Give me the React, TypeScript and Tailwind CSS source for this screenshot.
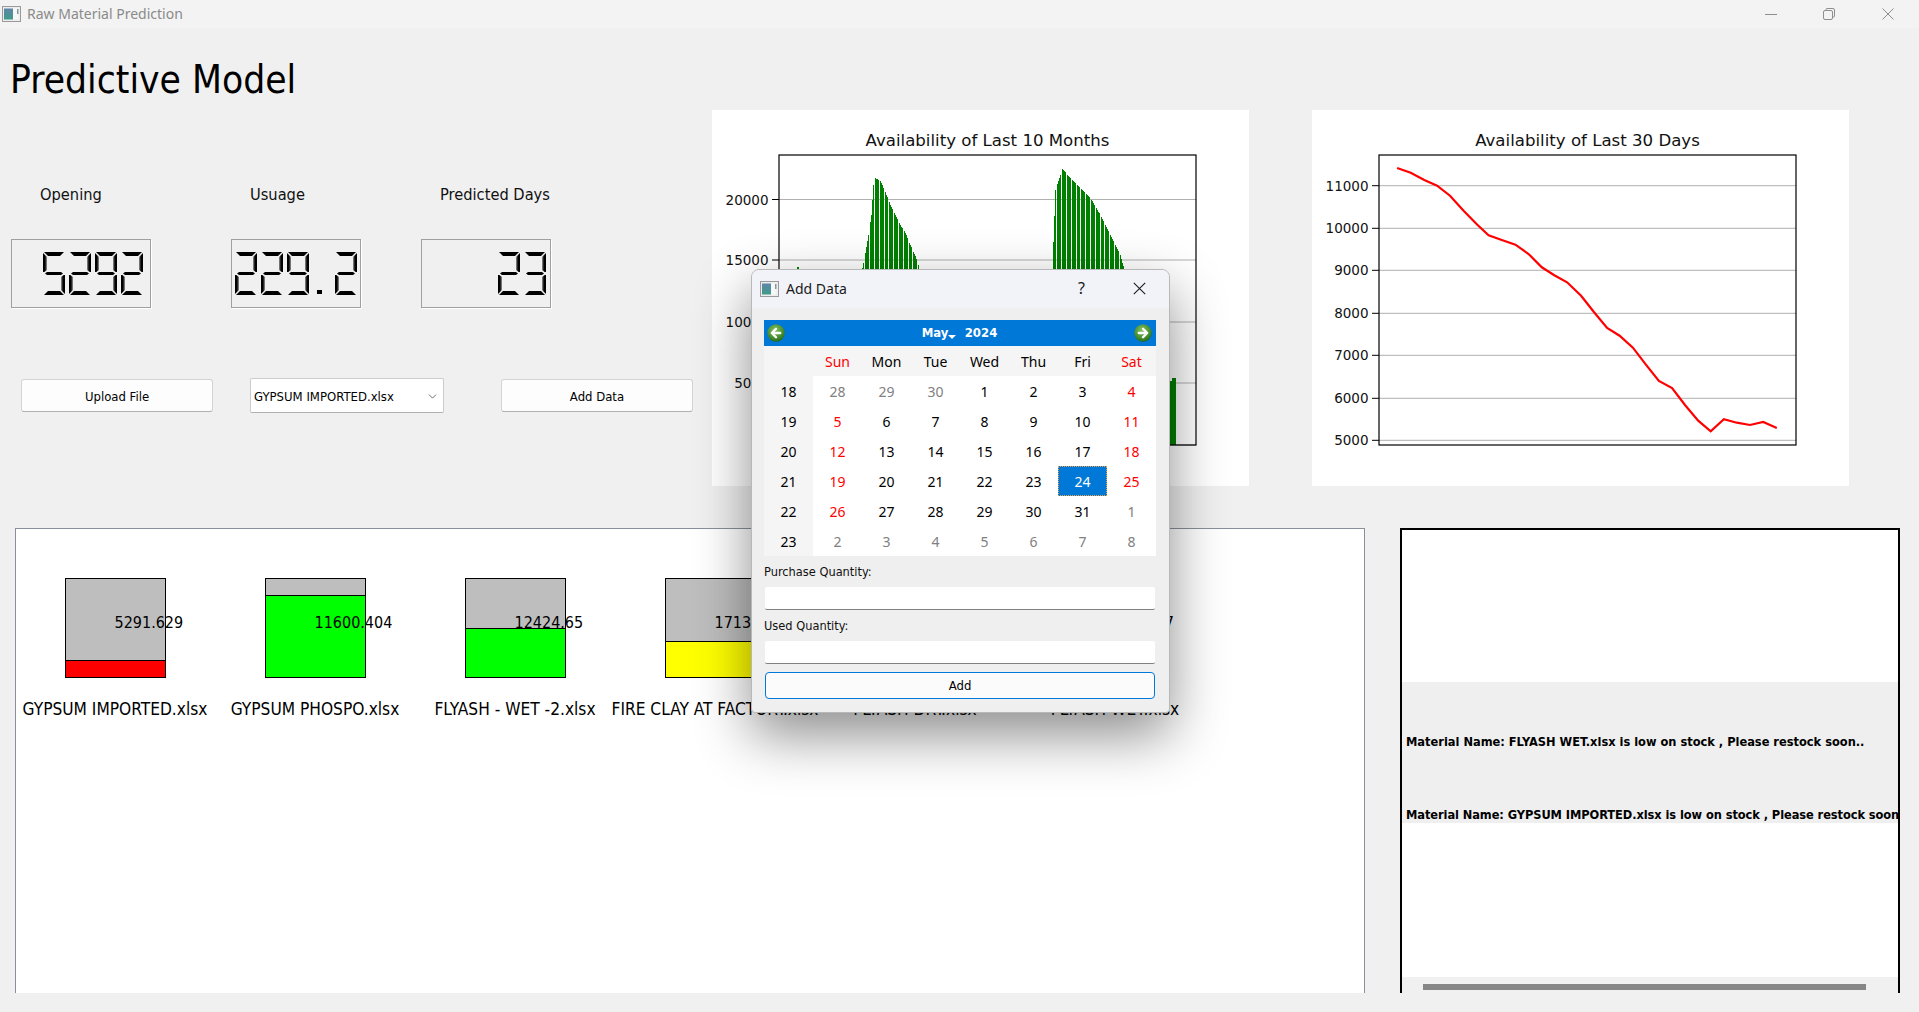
import { ChevronDown } from "lucide-react";

const ui = "[font-family:'DejaVu_Sans_Condensed','Liberation_Sans',sans-serif]";
const seg = "[font-family:'Noto_Sans','Open_Sans',sans-serif]";

const segA = "col-start-1 col-end-4 row-start-1 row-end-2 bg-black [clip-path:polygon(1px_0,calc(100%-1px)_0,calc(100%-5px)_100%,5px_100%)]";
const segD = "col-start-1 col-end-4 row-start-5 row-end-6 bg-black [clip-path:polygon(5px_0,calc(100%-5px)_0,calc(100%-1px)_100%,1px_100%)]";
const segG = "col-start-1 col-end-4 row-start-3 row-end-4 bg-black [clip-path:polygon(4px_0,calc(100%-4px)_0,calc(100%-2px)_50%,calc(100%-4px)_100%,4px_100%,2px_50%)]";
const segF = "col-start-1 col-end-2 row-start-1 row-end-3 bg-[linear-gradient(to_right,#000_50%,#999_100%)] [clip-path:polygon(0_1px,100%_5px,100%_calc(100%-2px),0_calc(100%+1px))]";
const segB = "col-start-3 col-end-4 row-start-1 row-end-3 bg-[linear-gradient(to_left,#000_50%,#999_100%)] [clip-path:polygon(0_5px,100%_1px,100%_calc(100%+1px),0_calc(100%-2px))]";
const segE = "col-start-1 col-end-2 row-start-4 row-end-6 bg-[linear-gradient(to_right,#000_50%,#999_100%)] [clip-path:polygon(0_-1px,100%_2px,100%_calc(100%-5px),0_calc(100%-1px))]";
const segC = "col-start-3 col-end-4 row-start-4 row-end-6 bg-[linear-gradient(to_left,#000_50%,#999_100%)] [clip-path:polygon(0_2px,100%_-1px,100%_calc(100%-1px),0_calc(100%-5px))]";

const digitSegs: Record<string, string[]> = {
  "2": [segA, segB, segG, segE, segD],
  "3": [segA, segB, segG, segC, segD],
  "5": [segA, segF, segG, segC, segD],
  "9": [segA, segF, segB, segG, segC, segD],
};

function Digit({ d }: { d: string }) {
  return (
    <div aria-hidden className="grid w-[22px] h-[43px] grid-cols-[4px_14px_4px] grid-rows-[4px_16px_3px_16px_4px]">
      {digitSegs[d].map((c) => (
        <div key={c} className={c} />
      ))}
    </div>
  );
}

function Lcd({ value, className }: { value: string; className: string }) {
  return (
    <div className={`relative h-[69px] border border-[#a0a0a0] shadow-[1px_1px_0_#ffffff] flex items-center justify-end gap-[4px] ${className}`}>
      <span className="absolute right-[6px] top-[10px] text-[36px] leading-[46px] text-transparent select-none">{value}</span>
      {value.split("").map((c, i) =>
        c === "." ? (
          <div key={i} aria-hidden className="w-[18px] h-[43px] flex items-end pl-[4px] pb-[1px]">
            <div className="w-[5px] h-[4px] bg-black" />
          </div>
        ) : (
          <Digit key={i} d={c} />
        )
      )}
    </div>
  );
}

function AppIcon() {
  return (
    <svg width="19" height="16" viewBox="0 0 19 16" className="shrink-0">
      <defs>
        <linearGradient id="iconFill" x1="0" y1="0" x2="0" y2="1">
          <stop offset="0" stopColor="#5f86a8" />
          <stop offset="1" stopColor="#3f9a8a" />
        </linearGradient>
      </defs>
      <rect x="0.5" y="0.5" width="18" height="15" fill="#ededed" stroke="#9a9a9a" />
      <rect x="2" y="2.5" width="9" height="11" fill="url(#iconFill)" />
      <rect x="11" y="2.5" width="5.5" height="11" fill="#f7f7f7" />
      <rect x="15" y="3" width="1.5" height="5" fill="#7d9a9a" />
    </svg>
  );
}

function NavArrow({ dir }: { dir: "l" | "r" }) {
  const id = dir === "l" ? "navL" : "navR";
  return (
    <svg width="18" height="18" viewBox="0 0 17 17">
      <defs>
        <radialGradient id={id} cx="0.45" cy="0.35" r="0.7">
          <stop offset="0" stopColor="#8cc56a" />
          <stop offset="0.7" stopColor="#3f8a2a" />
          <stop offset="1" stopColor="#1f5f1a" />
        </radialGradient>
      </defs>
      <circle cx="8.5" cy="8.5" r="8.2" fill={`url(#${id})`} />
      <g transform={dir === "l" ? "" : "translate(17,0) scale(-1,1)"} fill="none" stroke="#ffffff" strokeWidth="2.2" strokeLinecap="round" strokeLinejoin="round">
        <path d="M12.5 8.5H5" />
        <path d="M8.5 4.5L4.5 8.5L8.5 12.5" />
      </g>
    </svg>
  );
}

type Env = [number, number][];
const peak1: Env = [[862,268],[865,253],[868,235],[871,215],[873,185],[875,178],[880,181],[885,192],[890,205],[895,215],[900,225],[905,233],[910,245],[915,256],[919,268]];
const peak2: Env = [[1053,242],[1055,190],[1060,175],[1062,169],[1070,178],[1080,188],[1090,198],[1100,215],[1110,235],[1120,255],[1124,270]];

function envelope(env: Env, x: number): number {
  for (let i = 0; i < env.length - 1; i++) {
    const [x0, y0] = env[i];
    const [x1, y1] = env[i + 1];
    if (x >= x0 && x <= x1) return y0 + ((x - x0) / (x1 - x0)) * (y1 - y0);
  }
  return 445;
}

function barsFor(env: Env): { x: number; y: number }[] {
  const out: { x: number; y: number }[] = [];
  for (let x = env[0][0]; x < env[env.length - 1][0]; x += 1) {
    if ((x * 10) % 48 < 10) continue;
    out.push({ x: x - 712, y: Math.round(envelope(env, x)) - 110 });
  }
  return out;
}

function ChartFrame({ title, ticks, children }: { title: string; ticks: [string, number][]; children: React.ReactNode }) {
  return (
    <svg width="537" height="376" viewBox="0 0 537 376" className="block bg-white [font-family:'DejaVu_Sans',sans-serif] shrink-0">
      <text x="275.5" y="36" textAnchor="middle" fontSize="16.6" fill="#111">{title}</text>
      {ticks.map(([label, y]) => (
        <g key={label}>
          <line x1="67" x2="484" y1={y} y2={y} stroke="#b0b0b0" strokeWidth="1" />
          <line x1="60" x2="67" y1={y} y2={y} stroke="#000" strokeWidth="1" />
          <text x="56.5" y={y + 5} textAnchor="end" fontSize="13.5" fill="#111">{label}</text>
        </g>
      ))}
      {children}
      <rect x="67" y="45" width="417" height="290" fill="none" stroke="#000" strokeWidth="1.2" />
    </svg>
  );
}

const linePts: [number, number][] = [[272,204],[310,218],[348,240],[384,257],[420,287],[458,332],[495,373],[528,406],[565,420],[603,434],[640,462],[677,502],[712,526],[748,547],[787,587],[823,636],[860,684],[895,707],[932,743],[968,793],[1005,843],[1042,864],[1078,915],[1115,962],[1150,994],[1187,958],[1223,968],[1260,975],[1297,966],[1335,984]];

const materials = [
  { name: "GYPSUM IMPORTED.xlsx", value: "5291.629", fill: 17, color: "bg-[#ff0000]" },
  { name: "GYPSUM PHOSPO.xlsx", value: "11600.404", fill: 84, color: "bg-[#00ff00]" },
  { name: "FLYASH - WET -2.xlsx", value: "12424.65", fill: 50, color: "bg-[#00ff00]" },
  { name: "FIRE CLAY AT FACTORY.xlsx", value: "1713.25", fill: 37, color: "bg-[#ffff00]" },
  { name: "FLYASH DRY.xlsx", value: "9120.5", fill: 40, color: "bg-[#00ff00]" },
  { name: "FLYASH WET.xlsx", value: "5120.47", fill: 20, color: "bg-[#ff0000]" },
];

function Gauge({ m }: { m: (typeof materials)[number] }) {
  return (
    <div className={`w-[200px] shrink-0 flex flex-col items-center pt-[49px] pr-[2px] ${ui}`}>
      <div className="relative w-[101px] h-[100px] border border-black bg-[#bebebe] flex flex-col justify-end">
        <div className={`border-t border-black ${m.color}`} style={{ height: `${m.fill}%` }} />
        <span className="absolute left-[49px] top-[34px] text-[16px] leading-[20px] text-black whitespace-nowrap">{m.value}</span>
      </div>
      <div className="mt-[21px] h-[20px] text-[17.2px] leading-[20px] text-black whitespace-nowrap">{m.name}</div>
    </div>
  );
}

const weeks: { wk: number; days: number[] }[] = [
  { wk: 18, days: [28, 29, 30, 1, 2, 3, 4] },
  { wk: 19, days: [5, 6, 7, 8, 9, 10, 11] },
  { wk: 20, days: [12, 13, 14, 15, 16, 17, 18] },
  { wk: 21, days: [19, 20, 21, 22, 23, 24, 25] },
  { wk: 22, days: [26, 27, 28, 29, 30, 31, 1] },
  { wk: 23, days: [2, 3, 4, 5, 6, 7, 8] },
];

function dayClass(rowIdx: number, col: number, n: number): string {
  const off = (rowIdx === 0 && n > 20) || (rowIdx >= 4 && n < 15);
  if (rowIdx === 3 && n === 24) return "bg-[#0078d7] text-white outline-1 outline-dotted outline-[#f0a040] -outline-offset-1";
  if (off) return "text-[#808080]";
  if (col === 0 || col === 6) return "text-[#ff0000]";
  return "text-black";
}

function Calendar() {
  const heads = ["Sun", "Mon", "Tue", "Wed", "Thu", "Fri", "Sat"];
  return (
    <div className={`w-[392px] ${seg}`}>
      <div className="h-[26px] bg-[#0078d7] flex items-center justify-between pl-[3px] pr-[4px]">
        <NavArrow dir="l" />
        <div className={`flex items-center text-white font-bold text-[13px] ${ui}`}>
          <span className="relative w-[43px]">
            May
            <span className="absolute left-[26px] top-[12px] w-0 h-0 border-x-[4px] border-x-transparent border-t-[4px] border-t-white" />
          </span>
          <span>2024</span>
        </div>
        <NavArrow dir="r" />
      </div>
      <div className="grid grid-cols-[49px_repeat(7,49px)] grid-rows-[30px_repeat(6,30px)] text-[14px] bg-white">
        <div className="bg-[#f5f5f5]" />
        {heads.map((h, i) => (
          <div key={h} className={`bg-[#f5f5f5] flex items-center justify-center ${i === 0 || i === 6 ? "text-[#ff0000]" : "text-black"}`}>{h}</div>
        ))}
        {weeks.map((w, r) => (
          <div key={w.wk} className="contents">
            <div className="bg-[#f5f5f5] flex items-center justify-center text-black">{w.wk}</div>
            {w.days.map((n, c) => (
              <div key={c} className={`flex items-center justify-center ${dayClass(r, c, n)}`}>{n}</div>
            ))}
          </div>
        ))}
      </div>
    </div>
  );
}

function Dialog() {
  return (
    <div className="absolute left-[751px] top-[269px] w-[419px] h-[444px] rounded-t-[8px] rounded-b-[4px] border border-[#b8b8b8] bg-[#efefef] shadow-[0_22px_55px_rgba(0,0,0,0.45)] flex flex-col overflow-hidden">
      <div className="h-[38px] shrink-0 bg-[#f1f3f8] flex items-center pl-[8px]">
        <AppIcon />
        <span className={`ml-[7px] text-[14px] leading-[18px] mb-[1px] text-[#1a1a1a] ${seg}`}>Add Data</span>
        <span className={`ml-auto mr-[48px] text-[16px] leading-[18px] mb-[2px] text-[#1a1a1a] ${seg}`}>?</span>
        <svg width="13" height="13" viewBox="0 0 13 13" className="mr-[23px] mb-[1px]" fill="none" stroke="#1a1a1a" strokeWidth="1.1">
          <path d="M0.8 0.8L12.2 12.2M12.2 0.8L0.8 12.2" />
        </svg>
      </div>
      <div className={`flex-1 pl-[12px] pt-[12px] ${ui}`}>
        <Calendar />
        <div className="mt-[8px] h-[16px] text-[12.7px] leading-[16px] text-[#111]">Purchase Quantity:</div>
        <div className="mt-[7px] ml-[1px] w-[390px] h-[23px] bg-white border-b border-[#808080] rounded-[2px]" />
        <div className="mt-[8px] h-[16px] text-[12.7px] leading-[16px] text-[#111]">Used Quantity:</div>
        <div className="mt-[7px] ml-[1px] w-[390px] h-[23px] bg-white border-b border-[#808080] rounded-[2px]" />
        <button className="mt-[8px] ml-[1px] w-[390px] h-[27px] rounded-[4px] border border-[#0078d7] bg-[#fbfbfb] text-[13px] text-black">Add</button>
      </div>
    </div>
  );
}

export default function App() {
  return (
    <div className={`relative w-full h-[1012px] overflow-hidden bg-[#f0f0f0] ${ui}`}>
      {/* window title bar */}
      <div className="h-[28px] bg-[#f3f3f3] flex items-center pl-[2px]">
        <AppIcon />
        <span className={`ml-[6px] text-[14px] leading-[18px] mb-[1px] text-[#8a8a8a] ${seg}`}>Raw Material Prediction</span>
        <div className="ml-auto flex items-center pr-[25px]">
          <svg width="12" height="12" viewBox="0 0 12 12" stroke="#8e8e8e" fill="none" className="mr-[46px]"><path d="M0 6.5H12" /></svg>
          <svg width="12" height="12" viewBox="0 0 12 12" stroke="#8e8e8e" fill="none" className="mr-[47px]">
            <rect x="0.5" y="2.5" width="9" height="9" rx="1.5" />
            <path d="M3 2.5V1.5A1 1 0 0 1 4 0.5H10A1.5 1.5 0 0 1 11.5 2V8A1 1 0 0 1 10.5 9H9.5" />
          </svg>
          <svg width="12" height="12" viewBox="0 0 12 12" stroke="#8e8e8e" fill="none"><path d="M0.5 0.5L11.5 11.5M11.5 0.5L0.5 11.5" /></svg>
        </div>
      </div>

      {/* top area */}
      <div className="h-[500px] flex">
        <div className="w-[712px] shrink-0">
          <h1 className="mt-[29px] h-[46px] pl-[10px] text-[38.6px] leading-[46px] text-black font-normal">Predictive Model</h1>
          <div className="mt-[82px] h-[20px] flex pl-[40px] text-[16.3px] leading-[20px] text-[#111]">
            <span className="w-[210px]">Opening</span>
            <span className="w-[190px]">Usuage</span>
            <span>Predicted Days</span>
          </div>
          <div className="mt-[34px] flex pl-[11px]">
            <Lcd value="5292" className="w-[140px] pr-[7px]" />
            <Lcd value="229.2" className="ml-[80px] w-[130px] pr-[3px]" />
            <Lcd value="23" className="ml-[60px] w-[130px] pr-[4px]" />
          </div>
          <div className="mt-[70px] h-[35px] flex items-center pl-[21px] text-[13px] text-black">
            <button className="w-[192px] h-[33px] pt-[2px] rounded-[3px] border border-[#d4d4d4] border-b-[#b0b0b0] bg-[#fdfdfd]">Upload File</button>
            <div className="ml-[37px] w-[194px] h-[35px] pt-[2px] border border-[#cccccc] border-b-[#b0b0b0] rounded-[2px] bg-white flex items-center justify-between pl-[3px] pr-[4px]">
              <span>GYPSUM IMPORTED.xlsx</span>
              <ChevronDown size={13} strokeWidth={1.4} color="#444444" />
            </div>
            <button className="ml-[57px] w-[192px] h-[33px] pt-[2px] rounded-[3px] border border-[#d4d4d4] border-b-[#b0b0b0] bg-[#fdfdfd]">Add Data</button>
          </div>
        </div>
        <div className="mt-[82px] flex gap-[63px]">
          <ChartFrame title="Availability of Last 10 Months" ticks={[["20000", 89.5], ["15000", 150], ["10000", 212], ["5000", 273], ["0", 335]]}>
            <rect x="85" y="157" width="2" height="178" fill="#008000" shapeRendering="crispEdges" />
            {[...barsFor(peak1), ...barsFor(peak2)].map((b) => (
              <rect key={b.x} x={b.x} y={b.y} width="1" height={335 - b.y} fill="#008000" shapeRendering="crispEdges" />
            ))}
            <rect x="458" y="271" width="2" height="64" fill="#008000" shapeRendering="crispEdges" />
            <rect x="460" y="268" width="4" height="67" fill="#008000" shapeRendering="crispEdges" />
          </ChartFrame>
          <ChartFrame title="Availability of Last 30 Days" ticks={[["11000", 75.7], ["10000", 118.3], ["9000", 160.3], ["8000", 203.3], ["7000", 245.3], ["6000", 288.3], ["5000", 330.3]]}>
            <polyline
              fill="none"
              stroke="#ff0000"
              strokeWidth="2.2"
              points={linePts.map(([x, y]) => `${(x / 2.8 - 12).toFixed(1)},${(y / 3 - 10).toFixed(1)}`).join(" ")}
            />
          </ChartFrame>
        </div>
      </div>

      {/* bottom area */}
      <div className="h-[465px] flex pl-[15px]">
        <div className="w-[1350px] h-full bg-white border-x border-t border-[#8a8f99] flex overflow-hidden">
          {materials.map((m) => (
            <Gauge key={m.name} m={m} />
          ))}
        </div>
        <div className="ml-[35px] w-[500px] h-full border-x-2 border-t-2 border-black bg-white flex flex-col">
          <div className="h-[152px] shrink-0" />
          <div className="h-[141px] shrink-0 bg-[#efefef] pl-[4px] pt-[50px] text-[12.7px] leading-[20px] font-bold text-black whitespace-nowrap overflow-hidden">
            <div>Material Name: FLYASH WET.xlsx is low on stock , Please restock soon..</div>
            <div className="mt-[53px] tracking-[-0.07px]">Material Name: GYPSUM IMPORTED.xlsx is low on stock , Please restock soon</div>
          </div>
          <div className="flex-1" />
          <div className="h-[16px] shrink-0 bg-[#f0f0f0] pl-[21px] pt-[7px]">
            <div className="w-[443px] h-[6px] bg-[#868686]" />
          </div>
        </div>
      </div>

      <Dialog />
    </div>
  );
}
